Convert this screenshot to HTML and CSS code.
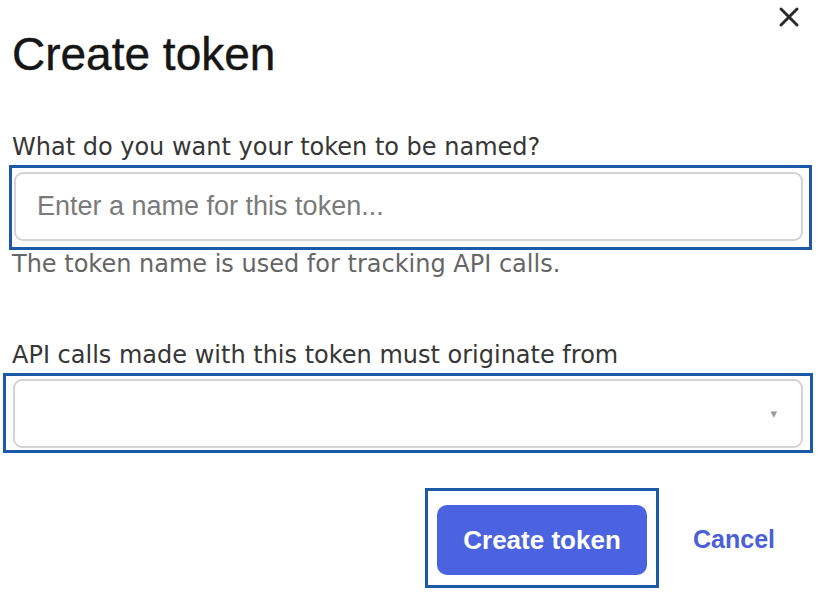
FILE: index.html
```html
<!DOCTYPE html>
<html lang="en">
<head>
<meta charset="utf-8">
<title>Create token</title>
<link rel="stylesheet" href="styles.css">
</head>
<body>
<div class="dialog">
  <button class="close" aria-label="Close">
    <svg width="22" height="22" viewBox="0 0 22 22"><path d="M3 3 L19 19 M19 3 L3 19" stroke="#2b2b2b" stroke-width="3" stroke-linecap="round" fill="none"/></svg>
  </button>
  <h1 class="title">Create token</h1>

  <label class="label" for="tname">What do you want your token to be named?</label>
  <div class="focus focus-name">
    <input id="tname" class="field" type="text" placeholder="Enter a name for this token...">
  </div>
  <p class="help">The token name is used for tracking API calls.</p>

  <label class="label label-origin">API calls made with this token must originate from</label>
  <div class="focus focus-origin">
    <div class="field select"><span class="caret">&#9662;</span></div>
  </div>

  <div class="actions">
    <div class="focus focus-btn">
      <button class="primary">Create token</button>
    </div>
    <a class="cancel" href="#">Cancel</a>
  </div>
</div>
</body>
</html>
```
FILE: styles.css
```css
html, body {
  margin: 0;
  padding: 0;
  background: #ffffff;
}

.dialog {
  position: relative;
  width: 821px;
  height: 604px;
  box-sizing: border-box;
  padding: 28px 0 0 0;
  font-family: "DejaVu Sans", Verdana, sans-serif;
}

.close {
  position: absolute;
  top: 6px;
  left: 778px;
  width: 22px;
  height: 22px;
  padding: 0;
  border: 0;
  background: none;
  display: block;
}
.close svg { display: block; }

.title {
  margin: 0 0 0 12px;
  font-family: "Liberation Sans", Arial, sans-serif;
  font-weight: 400;
  font-size: 46px;
  line-height: 52px;
  color: #161616;
  -webkit-text-stroke: 0.4px #161616;
}

.label {
  display: block;
  margin: 53px 0 0 12px;
  font-size: 24px;
  line-height: 28px;
  color: #363636;
}

.label-origin {
  margin-top: 63px;
}

.focus {
  border: 3px solid #1c5aa8;
  box-sizing: border-box;
}

.focus-name {
  margin: 4px 0 0 9px;
  width: 803px;
  padding: 4px 6px 6px 2px;
}

.focus-origin {
  margin: 4px 0 0 3px;
  width: 810px;
  padding: 3px 7px 2px 7px;
}

.field {
  display: block;
  width: 100%;
  height: 69px;
  box-sizing: border-box;
  margin: 0;
  border: 2px solid #d4d4d4;
  border-radius: 9px;
  background: #fff;
  padding: 0 0 0 21px;
  font-family: "Liberation Sans", Arial, sans-serif;
  font-size: 27px;
  color: #333;
  outline: none;
}

.field::placeholder {
  color: #7a7a7a;
}

.select {
  display: flex;
  align-items: center;
  justify-content: flex-end;
  padding-right: 24px;
}

.caret {
  font-family: "DejaVu Sans", sans-serif;
  font-size: 13px;
  color: #9a9a9a;
  line-height: 1;
}

.help {
  margin: 0 0 0 12px;
  font-size: 24px;
  line-height: 28px;
  color: #666666;
}

.actions {
  display: flex;
  justify-content: flex-end;
  align-items: center;
  margin-top: 35px;
  padding-right: 46px;
  gap: 34px;
}

.focus-btn {
  width: 234px;
  height: 100px;
  padding: 14px 9px 10px 9px;
}

.primary {
  display: block;
  width: 210px;
  height: 70px;
  margin: 0;
  border: 0;
  border-radius: 10px;
  background: #4b63e0;
  color: #ffffff;
  font-family: "Liberation Sans", Arial, sans-serif;
  font-weight: 700;
  font-size: 26px;
  padding: 0;
}

.cancel {
  font-family: "Liberation Sans", Arial, sans-serif;
  font-weight: 700;
  font-size: 25px;
  color: #4a5fd8;
  text-decoration: none;
  position: relative;
  top: 1px;
}
```
